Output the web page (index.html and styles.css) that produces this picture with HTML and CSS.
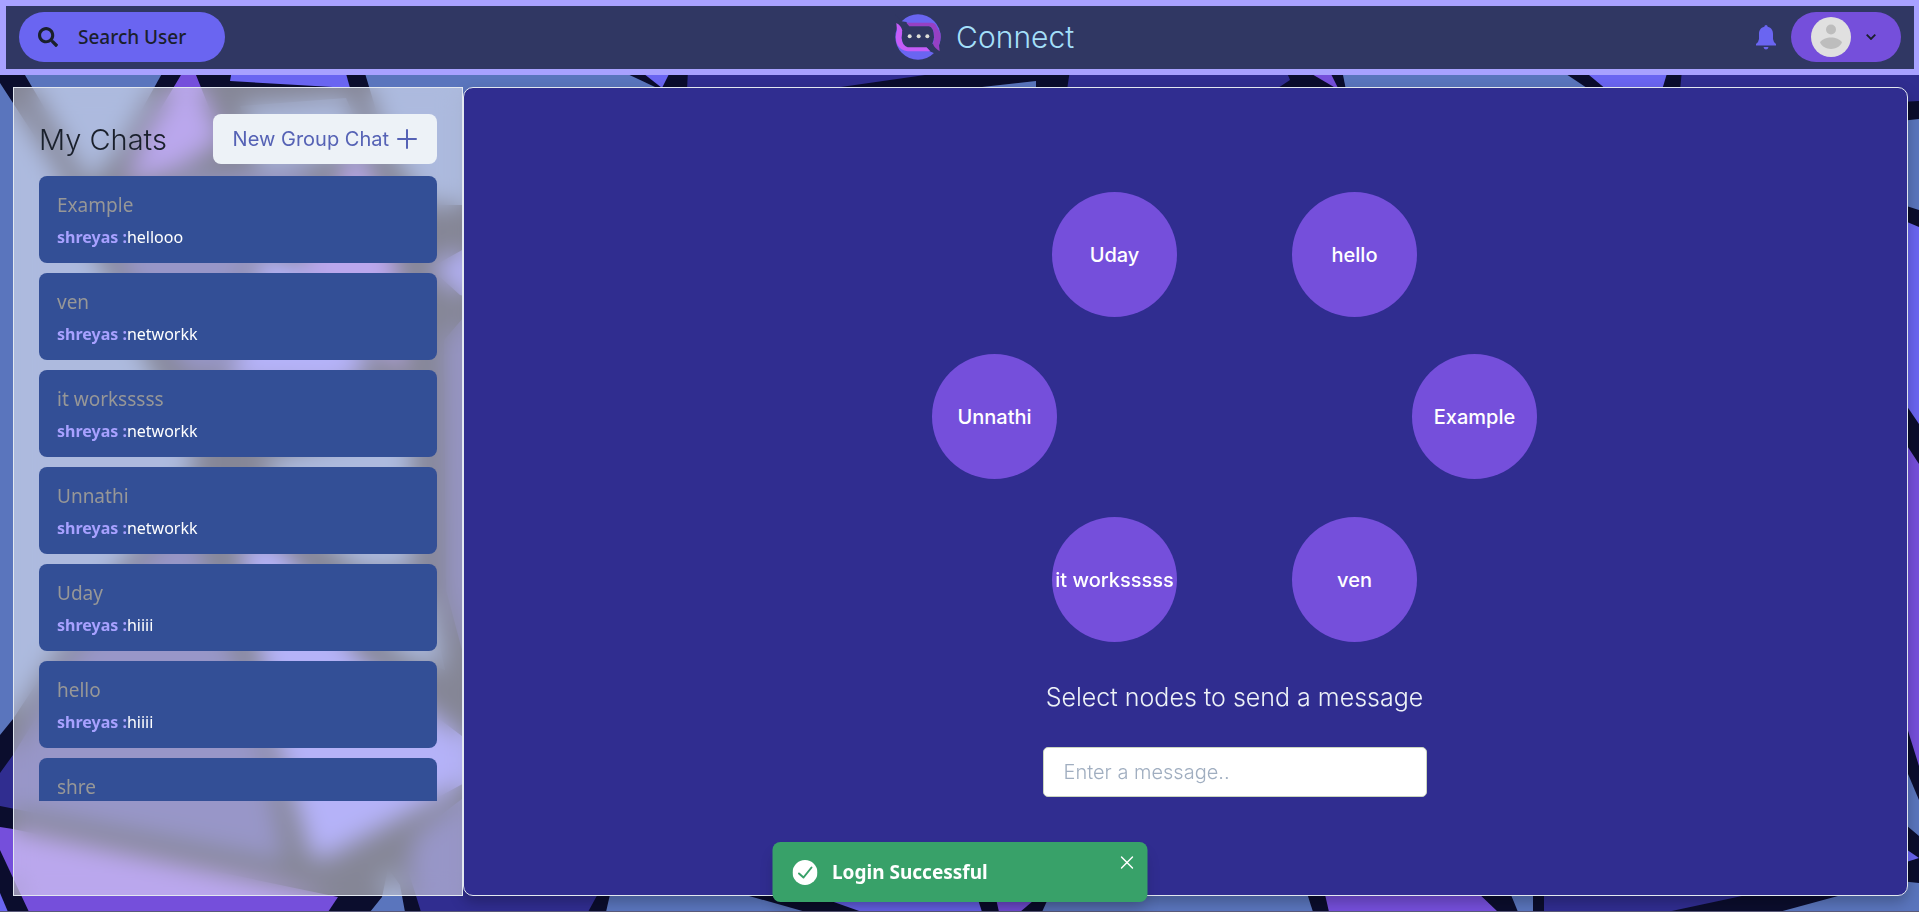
FILE: index.html
```html
<!DOCTYPE html>
<html lang="en">
<head>
<meta charset="utf-8">
<title>Connect</title>
<link rel="stylesheet" href="styles.css">
</head>
<body>
<svg class="backdrop" viewBox="0 0 1919 912" preserveAspectRatio="none" aria-hidden="true">
  <rect width="1919" height="912" fill="#0b0d2d"/>
  <g fill="#5a75bd">
    <path d="M0 83L13 103L58 172L98 258L148 363L198 463L128 556L62 645L13 719L0 735Z"/>
    <path d="M22 70H164L150 95L122 145L90 185Z"/>
    <path d="M240 106L346 98L375 165L350 150L262 170Z"/>
    <path d="M364 70H619L655 87V205H425L385 140Z"/>
    <path d="M262 462L412 420V570H360L300 520Z"/>
    <path d="M350 590L430 600L445 670L400 655Z"/>
    <path d="M388 868L400 885L405 912H370L382 897Z"/>
    <path d="M1036 81V90H955Z"/>
    <path d="M1342 70H1560L1590 90H1346Z"/>
    <path d="M1900 121L1919 119V210L1900 204Z"/>
    <path d="M1900 755L1919 800V836L1900 820Z"/>
    <path d="M611 890H728L806 912H606Z"/>
    <path d="M1052 890H1306L1313 912H1042Z"/>
    <path d="M1509 890H1533V912H1518Z"/>
    <path d="M1860 890L1900 881L1919 883V912H1779Z"/>
  </g>
  <g fill="#302d90">
    <path d="M185 180L320 168L245 265L226 374H186L118 258Z"/>
    <path d="M188 510L215 600L262 740L285 862L0 806V773L13 755L75 655L140 570Z"/>
    <path d="M444 340L470 310V680L446 590Z"/>
    <path d="M415 835L480 785H600V890L588 912H421L408 870Z"/>
    <path d="M688 70H960L820 90H687Z"/>
    <path d="M1070 70H1286L1290 80L1275 90H1067Z"/>
    <path d="M1682 70H1919V101L1900 102V90H1680Z"/>
    <path d="M1544 890H1770L1667 912H1544Z"/>
  </g>
  <g fill="#6a65f1">
    <path d="M232 70H345L350 88L230 81Z"/>
    <path d="M262 250L300 268L372 362L340 388L228 385L246 320Z"/>
    <path d="M480 240V300L460 295L430 268Z"/>
    <path d="M240 540L280 545L360 660L470 742V780L325 858H312L276 740Z"/>
    <path d="M0 893L8 912H0Z"/>
    <path d="M639 70H671L662 88Z"/>
    <path d="M1583 70H1668L1662 90H1607Z"/>
    <path d="M1900 219L1919 227V424L1900 396Z"/>
    <path d="M1900 845L1919 858L1900 864Z"/>
    <path d="M800 890H975L982 912H862Z"/>
  </g>
  <g fill="#754fdb">
    <path d="M184 70H194L222 140L180 168L125 186L145 135Z"/>
    <path d="M353 152L380 190L400 290L405 375L300 268Z"/>
    <path d="M0 827L13 829L338 897L328 912H29L0 850Z"/>
    <path d="M1305 70H1329L1339 90Z"/>
    <path d="M1900 435L1919 464V766L1900 705Z"/>
    <path d="M994 890H1046L1020 912H999Z"/>
    <path d="M1324 890H1475L1498 912H1329Z"/>
  </g>
</svg>

<header class="topbar">
  <button class="search" type="button">
    <svg width="20" height="20" viewBox="0 0 512 512" fill="currentColor" aria-hidden="true"><path d="M505 442.700L405.300 343c-4.500-4.500-10.600-7-17-7H372c27.600-35.300 44-79.700 44-128C416 93.100 322.900 0 208 0S0 93.100 0 208s93.100 208 208 208c48.300 0 92.700-16.400 128-44v16.300c0 6.400 2.500 12.500 7 17l99.700 99.700c9.400 9.400 24.600 9.400 33.900 0l28.300-28.300c9.400-9.400 9.400-24.600.1-34zM208 336c-70.700 0-128-57.200-128-128 0-70.700 57.200-128 128-128 70.700 0 128 57.200 128 128 0 70.700-57.200 128-128 128z"/></svg>
    <span>Search User</span>
  </button>
  <div class="brand">
    <svg width="46" height="46" viewBox="0 0 138 138" aria-hidden="true">
      <circle cx="69" cy="69" r="68" fill="#6a65f1"/>
      <path d="M0 0V34L14 36L24 60L44 36L34 24L20 22L8 10Z" fill="#303763"/>
      <path d="M94 100L104 112L118 118L138 138V100L118 86Z" fill="#303763"/>
      <path d="M34 26H108Q122 27 124 36L136 58Q139 76 132 92L134 112Q118 102 114 90L118 72Q117 40 104 38H44Z" fill="#9640c4"/>
      <path d="M4 27Q20 36 22 50L20 72Q22 96 38 99H94L106 112H38Q16 110 6 90Q-1 70 6 50Z" fill="#c55cf8"/>
      <path d="M40 37H102Q116 40 117 70Q115 90 104 100H38Q22 95 20 72L22 52Z" fill="#303763"/>
      <g fill="#deded8"><circle cx="44" cy="67" r="6"/><circle cx="71" cy="67" r="6"/><circle cx="97" cy="67" r="6"/></g>
    </svg>
    <h1>Connect</h1>
  </div>
  <div class="account">
    <button class="bell" type="button" aria-label="Notifications">
      <svg width="20" height="25" viewBox="0 0 20 25" fill="currentColor" aria-hidden="true"><path d="M10 0Q11.500 0 11.700 1.700C15.500 2.500 17 5.500 17 9V14Q17.300 17 20 19V20.500H0V19Q2.700 17 3 14V9C3 5.500 4.500 2.500 8.300 1.700Q8.500 0 10 0ZM7.500 22H12.500Q12 24.500 10 24.500T7.500 22Z"/></svg>
    </button>
    <button class="profile" type="button" aria-label="Account menu">
      <svg width="40" height="40" viewBox="0 0 40 40" aria-hidden="true"><circle cx="20" cy="20" r="20" fill="#e0e0e0"/><circle cx="20" cy="12.500" r="5" fill="#bdbdbd"/><path d="M9 25.500C13 18.800 27 18.800 31 25.500C27 34 13 34 9 25.500Z" fill="#bdbdbd"/></svg>
      <svg width="10" height="6" viewBox="0 0 10 6" fill="none" stroke="#1a202c" stroke-width="1.800" aria-hidden="true"><path d="M.7.700L5 5L9.300.700"/></svg>
    </button>
  </div>
</header>

<main class="workspace">
  <aside class="chats">
    <div class="chats-head">
      <h2>My Chats</h2>
      <button class="new-group" type="button">New Group Chat
        <svg width="20" height="20" viewBox="0 0 20 20" stroke="currentColor" stroke-width="2" stroke-linecap="round" aria-hidden="true"><path d="M10 1V19M1 10H19"/></svg>
      </button>
    </div>
    <ul class="chat-list">
      <li class="chat"><span class="chat-name">Example</span><span class="chat-last"><b>shreyas :</b>hellooo</span></li>
      <li class="chat"><span class="chat-name">ven</span><span class="chat-last"><b>shreyas :</b>networkk</span></li>
      <li class="chat"><span class="chat-name">it worksssss</span><span class="chat-last"><b>shreyas :</b>networkk</span></li>
      <li class="chat"><span class="chat-name">Unnathi</span><span class="chat-last"><b>shreyas :</b>networkk</span></li>
      <li class="chat"><span class="chat-name">Uday</span><span class="chat-last"><b>shreyas :</b>hiiii</span></li>
      <li class="chat"><span class="chat-name">hello</span><span class="chat-last"><b>shreyas :</b>hiiii</span></li>
      <li class="chat"><span class="chat-name">shre</span></li>
    </ul>
  </aside>

  <section class="network">
    <div class="diagram">
      <button class="node node-1" type="button">Uday</button>
      <button class="node node-2" type="button">hello</button>
      <button class="node node-3" type="button">Unnathi</button>
      <button class="node node-4" type="button">Example</button>
      <button class="node node-5" type="button">it worksssss</button>
      <button class="node node-6" type="button">ven</button>
    </div>
    <label class="prompt" for="message">Select nodes to send a message</label>
    <input class="message" id="message" type="text" placeholder="Enter a message..">
  </section>
</main>

<div class="toast" role="status">
  <svg width="25" height="25" viewBox="0 0 25 25" aria-hidden="true"><circle cx="12.500" cy="12.500" r="12.500" fill="#fff"/><path d="M6.500 13.500L11 17.500L19 7.500" fill="none" stroke="#38a169" stroke-width="2" stroke-linecap="round" stroke-linejoin="round"/></svg>
  <span>Login Successful</span>
  <button class="toast-close" type="button" aria-label="Close">
    <svg width="13" height="13" viewBox="0 0 13 13" stroke="currentColor" stroke-width="1.500" stroke-linecap="round" aria-hidden="true"><path d="M1 1L12 12M12 1L1 12"/></svg>
  </button>
</div>
</body>
</html>
```
FILE: styles.css
```css
* {
  box-sizing: border-box;
}

body {
  margin: 0;
  height: 100vh;
  display: flex;
  flex-direction: column;
  overflow: hidden;
  border-bottom: 1px solid #5a5a78;
  font-family: "Noto Sans", "Open Sans", sans-serif;
  color: #1a202c;
}

button {
  font: inherit;
  border: 0;
  padding: 0;
  cursor: pointer;
}

svg {
  display: block;
  flex: none;
}

h1,
h2 {
  margin: 0;
  font-weight: 300;
}

.backdrop {
  position: fixed;
  inset: 0;
  z-index: -1;
  width: 100%;
  height: 100%;
}

.topbar {
  display: flex;
  align-items: center;
  justify-content: space-between;
  padding: 6px 13px 7px;
  border: 6px solid #a8a1ff;
  border-right-width: 5px;
  background: #303763;
}

.account {
  display: flex;
  align-items: center;
  gap: 15px;
}

.search {
  display: flex;
  align-items: center;
  gap: 20px;
  height: 50px;
  padding: 0 39px 0 19px;
  border-radius: 25px;
  background: #6a65f1;
  color: #1a202c;
  font-size: 19px;
  font-weight: 500;
}

.brand {
  display: flex;
  align-items: center;
  gap: 15px;
  color: #a4dff9;
}

.brand h1,
.chats h2,
.new-group,
.node,
.prompt,
.message {
  font-family: Inter, "Open Sans", sans-serif;
}

.brand h1 {
  font-size: 30px;
  line-height: 45px;
}

.bell {
  padding-left: 12px;
  background: none;
  color: #6a65f1;
}

.profile {
  display: flex;
  align-items: center;
  gap: 15px;
  height: 50px;
  padding: 0 25px 0 20px;
  border-radius: 25px;
  background: #754fdb;
}

.workspace {
  flex: 1;
  min-height: 0;
  display: flex;
  padding: 12px 11px 15px 13px;
}

.chats {
  width: 450px;
  flex: none;
  display: flex;
  flex-direction: column;
  gap: 12px;
  padding: 26px 25px 94px;
  border: 1px solid #e2e8f0;
  background: rgba(255, 255, 255, 0.5);
  backdrop-filter: blur(12px);
}

.chats-head {
  display: flex;
  align-items: center;
  justify-content: space-between;
}

.chats h2 {
  font-size: 29px;
}

.new-group {
  display: flex;
  align-items: center;
  gap: 8px;
  height: 50px;
  padding: 0 20px;
  border-radius: 8px;
  background: #edf2f7;
  color: #5562b5;
  font-size: 20px;
}

.chat-list {
  flex: 1;
  min-height: 0;
  overflow: hidden;
  display: flex;
  flex-direction: column;
  gap: 10px;
  margin: 0;
  padding: 0;
  list-style: none;
}

.chat {
  flex: none;
  display: flex;
  flex-direction: column;
  min-height: 87px;
  padding: 11px 18px;
  border-radius: 8px;
  background: #334f96;
}

.chat-name {
  font-size: 19px;
  line-height: 36px;
  color: #979797;
}

.chat-last {
  font-size: 16px;
  line-height: 29px;
  color: #fff;
}

.chat-last b {
  color: #a8a1ff;
}

.network {
  flex: 1;
  min-width: 0;
  display: flex;
  flex-direction: column;
  align-items: center;
  justify-content: center;
  padding: 6px 0 0 98px;
  border: 1px solid #e2e8f0;
  border-radius: 10px;
  background: #302d90;
  box-shadow: 0 6px 14px rgba(0, 0, 0, 0.25);
}

.diagram {
  position: relative;
  width: 605px;
  height: 450px;
}

.node {
  position: absolute;
  width: 125px;
  height: 125px;
  border-radius: 50%;
  background: #754fdb;
  color: #fff;
  font-size: 20px;
  font-weight: 500;
  white-space: nowrap;
}

.node-1 { left: 120px; top: 0; }
.node-2 { left: 360px; top: 0; }
.node-3 { left: 0; top: 162px; }
.node-4 { left: 480px; top: 162px; }
.node-5 { left: 120px; top: 325px; }
.node-6 { left: 360px; top: 325px; }

.prompt {
  margin: 36px 0 31px;
  font-size: 25px;
  line-height: 38px;
  font-weight: 300;
  color: #edf2f7;
}

.message {
  width: 384px;
  height: 50px;
  padding: 0 20px;
  border: 1px solid #cbd5c0;
  border-radius: 5px;
  background: #fff;
  font-size: 20px;
  font-weight: 300;
}

.message::placeholder {
  color: #a0aec0;
  opacity: 1;
}

.toast {
  position: fixed;
  left: 50%;
  bottom: 10px;
  transform: translateX(-50%);
  display: flex;
  align-items: center;
  gap: 15px;
  width: 375px;
  height: 60px;
  padding: 0 20px;
  border-radius: 8px;
  background: #38a169;
  color: #fff;
  font-size: 19px;
  font-weight: 700;
  box-shadow: 0 10px 15px -3px rgba(0, 0, 0, 0.2);
}

.toast-close {
  align-self: flex-start;
  margin: 14px -6px 0 auto;
  background: none;
  color: #fff;
}
```
